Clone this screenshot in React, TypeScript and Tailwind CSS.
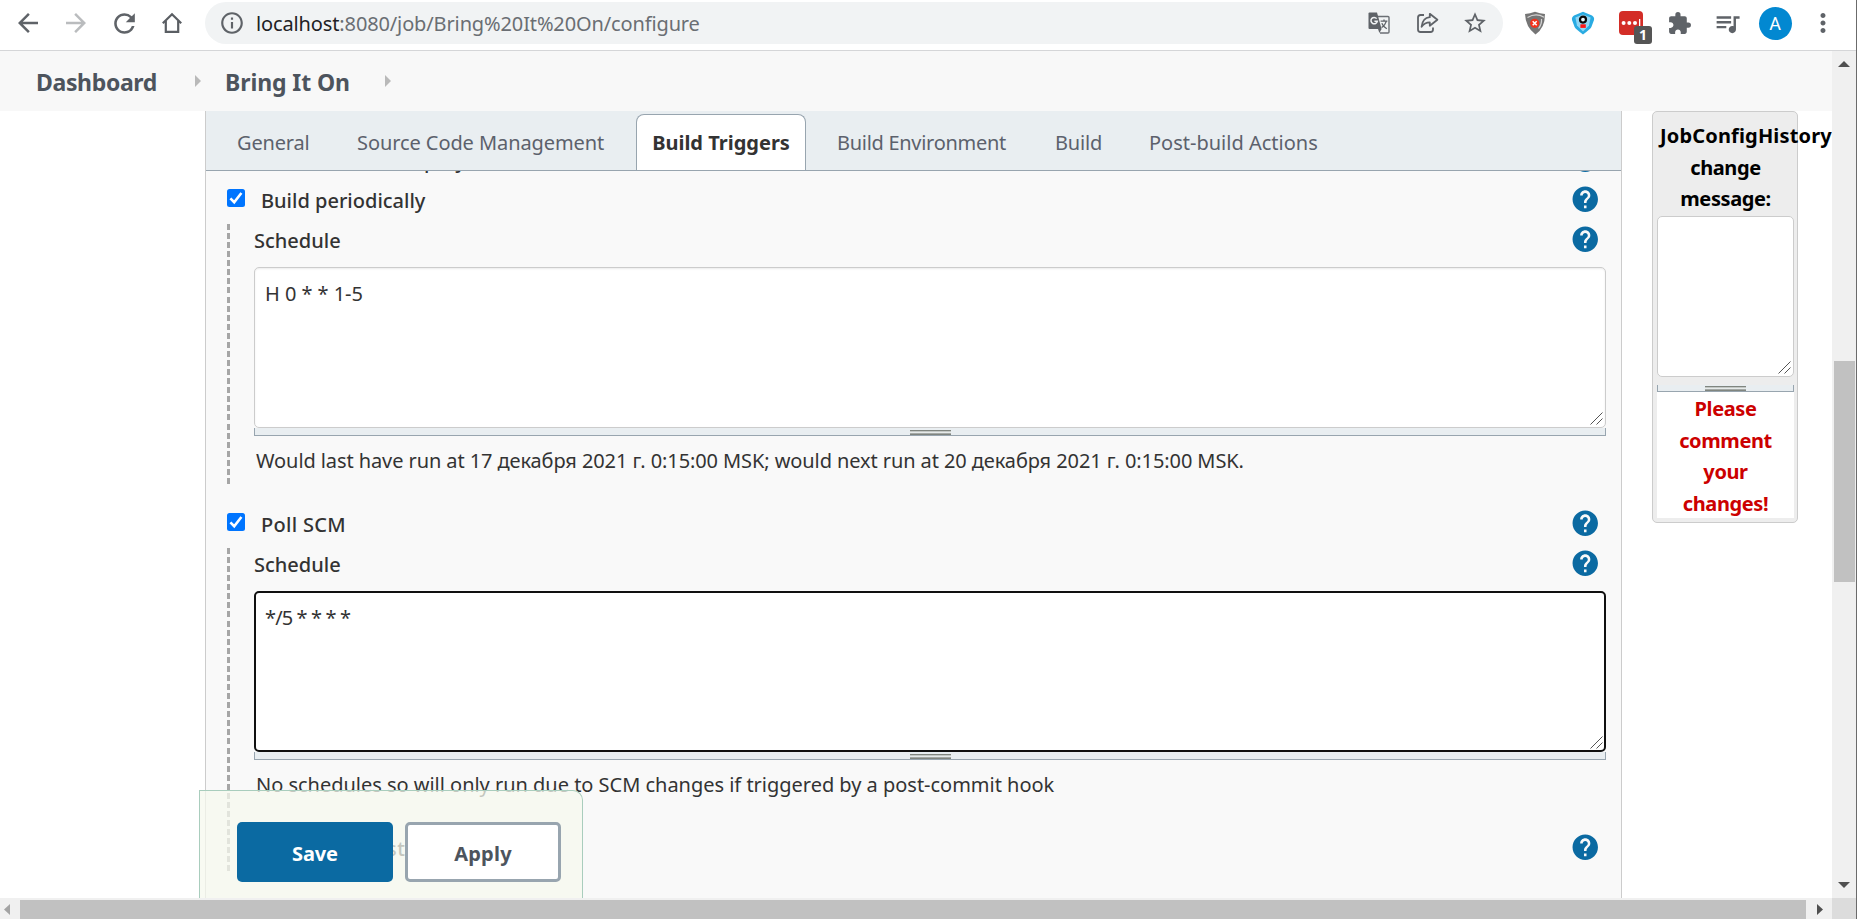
import type { ReactNode } from 'react';
import {
  MdArrowBack,
  MdArrowForward,
  MdExtension,
  MdHelp,
  MdInfoOutline,
  MdMoreVert,
  MdQueueMusic,
  MdRefresh,
  MdStarBorder,
} from 'react-icons/md';

function Cell({ children }: { children: ReactNode }) {
  return <div className="flex h-full w-12 shrink-0 items-center justify-center">{children}</div>;
}

function HomeIcon() {
  return (
    <svg width="22" height="22" viewBox="0 0 22 22" fill="none" stroke="#5a5e63" strokeWidth="2.2">
      <path d="M1.8 11.3 L11 2.2 L20.2 11.3" />
      <path d="M4.8 9 V19.8 H17.2 V9" />
    </svg>
  );
}

function TranslateIcon() {
  return (
    <svg width="22" height="22" viewBox="0 0 22 22" fill="none">
      <path d="M9 4.5 H20 Q21 4.5 21 5.5 V20 Q21 21 20 21 H12" stroke="#6b6f74" strokeWidth="1.4" />
      <path d="M1.5 .5 H9 L13.6 17 H1.5 Q.5 17 .5 16 V1.5 Q.5 .5 1.5 .5 Z" fill="#5f6368" />
      <path d="M10 17 H13.6 L11.4 21 Z" fill="#5f6368" />
      <path d="M8.7 6.6 A3.2 3.2 0 1 0 9.3 9.3 H6.4" stroke="#f1f3f4" strokeWidth="1.5" />
      <path d="M12.6 9.2 H19.4 M16 7.4 V9.2 M18.3 9.4 Q17 13.5 13.6 15.6 M13.8 11.2 Q15.2 14.4 18.8 16.8" stroke="#5f6368" strokeWidth="1.3" />
    </svg>
  );
}

function ShareIcon() {
  return (
    <svg width="23" height="22" viewBox="0 0 23 22" fill="none" stroke="#5f6368" strokeWidth="1.8" strokeLinejoin="round">
      <path d="M8 3 H4.5 Q2 3 2 5.5 V17.5 Q2 20 4.5 20 H14.5 Q17 20 17 17.5 V15.5" />
      <path d="M13.8 1.8 L21.4 7.8 L13.8 13.8 V10.4 Q8.6 10.4 5.6 14.8 Q6.4 6 13.8 5.2 Z" />
    </svg>
  );
}

function ShieldIcon() {
  return (
    <svg width="22" height="24" viewBox="0 0 22 24" fill="none">
      <path d="M1 3 Q6 2.8 11 .8 Q16 2.8 21 3 Q21 17 11.5 23.5 Q1.5 16 1 3 Z" fill="#757575" />
      <path d="M3.5 6.5 Q12 1.5 20 6.2 M14.5 17.5 Q18 13 17.5 8" stroke="#d4d4d4" strokeWidth="1.2" />
      <circle cx="10.7" cy="12.3" r="4.6" fill="#f3321c" />
      <path d="M8.7 10.3 L12.7 14.3 M12.7 10.3 L8.7 14.3" stroke="#fff" strokeWidth="1.5" />
    </svg>
  );
}

function PentagonIcon() {
  return (
    <svg width="24" height="24" viewBox="0 0 24 24" fill="none">
      <path d="M12 .8 L21 4.4 Q23.6 6 23 9 L20.4 16 Q19.6 18 12 23.4 Q4.4 18 3.6 16 L1 9 Q.4 6 3 4.4 Z" fill="#29abe2" />
      <path d="M12 3.4 L19.6 6.6 L18 14.6 L12 20.4 L6 14.6 L4.4 6.6 Z" fill="#8fd6f5" />
      <circle cx="12" cy="8.6" r="3" fill="#e8f7fd" stroke="#0a0a0a" strokeWidth="2.2" />
      <rect x="9.4" y="13.3" width="5.4" height="3.6" fill="#ff1616" />
    </svg>
  );
}

function PasswordIcon() {
  return (
    <div className="relative size-6 rounded-sm bg-[#d32d27]">
      <svg width="24" height="24" viewBox="0 0 24 24" fill="#fff">
        <circle cx="4.6" cy="12" r="2" />
        <circle cx="10.3" cy="12" r="2" />
        <circle cx="16" cy="12" r="2" />
        <rect x="20" y="8" width="1.3" height="8" />
      </svg>
      <div className="absolute top-[15px] left-[15px] flex h-[18px] w-[18px] items-center justify-center rounded-[3px] bg-[#555] text-[14px] leading-none font-bold text-white">
        1
      </div>
    </div>
  );
}

function BrowserBar() {
  return (
    <header className="flex h-[51px] shrink-0 items-start border-b border-[#d5d6d8] bg-white pt-0.5 pl-1 text-[#5f6368]">
      <div className="flex h-[42px] pr-[9px]">
        <Cell><MdArrowBack size={30} /></Cell>
        <Cell><MdArrowForward size={30} className="text-[#babcbe]" /></Cell>
        <Cell><MdRefresh size={31} /></Cell>
        <Cell><HomeIcon /></Cell>
      </div>
      <div className="flex h-[42px] w-[1298px] items-center rounded-full bg-[#f1f3f4] pr-1 pl-3.5">
        <MdInfoOutline size={26} />
        <div className="flex-1 pt-0.5 pl-[11px] text-[20px] leading-[40px] tracking-[-0.13px] text-[#6a6e73]">
          <span className="text-[#202124]">localhost</span>:8080/job/Bring%20It%20On/configure
        </div>
        <Cell><TranslateIcon /></Cell>
        <Cell><ShareIcon /></Cell>
        <Cell><MdStarBorder size={26} /></Cell>
      </div>
      <div className="flex h-[42px] pl-2">
        <Cell><ShieldIcon /></Cell>
        <Cell><PentagonIcon /></Cell>
        <Cell><PasswordIcon /></Cell>
        <Cell><MdExtension size={25} /></Cell>
        <Cell><MdQueueMusic size={29} /></Cell>
        <Cell>
          <div className="flex size-[33px] items-center justify-center rounded-full bg-[#0288d1] font-[Roboto,sans-serif] text-[18px] text-white">A</div>
        </Cell>
        <Cell><MdMoreVert size={30} /></Cell>
      </div>
    </header>
  );
}

function Crumb() {
  return (
    <svg width="6" height="12" viewBox="0 0 6 12" fill="#b9b9b9">
      <path d="M0 0 L6 6 L0 12 Z" />
    </svg>
  );
}

function Breadcrumbs() {
  return (
    <nav className="flex h-[60px] shrink-0 items-center bg-[#f8f8f8] pl-9 text-[23px] font-bold text-[#4d545d]">
      <span className="w-[159px] pt-[3px] tracking-[-0.35px]">Dashboard</span>
      <Crumb />
      <span className="ml-[24px] w-[160px] pt-[3px] tracking-[-0.1px]">Bring It On</span>
      <Crumb />
    </nav>
  );
}

function Tabs() {
  return (
    <div className="flex h-[60px] shrink-0 border-b border-[#98a5af] bg-[#e9eef1] pt-3 pl-[31px] leading-[40px] text-[#5c616c]">
      <div className="w-[120px] tracking-[-0.18px]">General</div>
      <div className="w-[279px] tracking-[-0.08px]">Source Code Management</div>
      <div className="-mt-[9px] mr-[31px] h-[56px] w-[170px] rounded-t-lg border border-b-0 border-[#98a5af] bg-white pt-2 text-center font-bold text-[#333]">
        Build Triggers
      </div>
      <div className="w-[218px] tracking-[-0.29px]">Build Environment</div>
      <div className="w-[94px] tracking-[-0.17px]">Build</div>
      <div className="tracking-[0px]">Post-build Actions</div>
    </div>
  );
}

function Help() {
  return <MdHelp size={30.5} className="mt-[2.5px] mr-[20.5px] ml-auto shrink-0 text-[#0b6aa2]" />;
}

function Checkbox({ checked }: { checked: boolean }) {
  return (
    <svg width="18" height="18" viewBox="0 0 18 18" fill="none" className="mt-2 shrink-0">
      {checked ? (
        <>
          <rect width="18" height="18" rx="2.5" fill="#0075ff" />
          <path d="M3.4 9.4 L7.2 13.2 L14.4 4" stroke="#fff" strokeWidth="2.6" />
        </>
      ) : (
        <rect x=".5" y=".5" width="17" height="17" rx="2.5" fill="#fff" stroke="#767676" />
      )}
    </svg>
  );
}

function OptionRow({ label, checked }: { label: string; checked: boolean }) {
  return (
    <div className="flex h-10 leading-[40px] font-medium">
      <Checkbox checked={checked} />
      <span className="ml-4 whitespace-nowrap">{label}</span>
      <Help />
    </div>
  );
}

function Corner() {
  return (
    <svg width="13" height="13" viewBox="0 0 13 13" fill="none" stroke="#555" className="mt-auto ml-auto">
      <path d="M.5 12.5 L12.5 .5 M6.5 12.5 L12.5 6.5" />
    </svg>
  );
}

function Grip() {
  return (
    <div className="flex h-[5px] w-[41px] flex-col">
      <div className="h-px bg-[#80857f]" />
      <div className="h-px bg-[#c4c8c5]" />
      <div className="h-px bg-[#e6eae9]" />
      <div className="h-px bg-[#a5a9a6]" />
      <div className="h-px bg-[#80857f]" />
    </div>
  );
}

function Schedule({ value, hint, focused, children }: { value: string; hint: string; focused?: boolean; children?: ReactNode }) {
  return (
    <div className="flex">
      <div className="mt-[3px] w-[3px] shrink-0 bg-[repeating-linear-gradient(to_bottom,#a6a6a6_0_6px,transparent_6px_9.07px)]" />
      <div className="ml-6 flex-1 pb-2">
        <div className="flex h-10 leading-[40px] font-medium">
          Schedule
          <Help />
        </div>
        <div
          className={
            focused
              ? 'mt-1.5 mr-[15px] flex h-[161px] rounded-[5px] border-2 border-[#101010] bg-white pt-2.5 pr-px pb-px pl-[9px] leading-[30px]'
              : 'mt-1.5 mr-[15px] flex h-[161px] rounded-[5px] border border-[#ccc] bg-white pt-[11px] pr-0.5 pb-0.5 pl-2.5 leading-[30px] shadow-[inset_0_1px_2px_rgba(0,0,0,0.08)]'
          }
        >
          <span className={focused ? 'tracking-[-0.88px]' : 'tracking-[-0.05px]'}>{value}</span>
          <Corner />
        </div>
        <div className="mr-[15px] flex h-2 items-end justify-center border border-t-0 border-[#98a5af] bg-[#e9eef1]">
          <Grip />
        </div>
        <div
          className={
            focused
              ? 'mt-2.5 pl-0.5 leading-[30px] tracking-[-0.02px] whitespace-nowrap'
              : 'mt-2.5 pl-0.5 leading-[30px] tracking-[-0.09px] whitespace-nowrap'
          }
        >
          {hint}
        </div>
        {children}
      </div>
    </div>
  );
}

function SidePanel() {
  return (
    <aside className="ml-[30px] h-[412px] w-[146px] shrink-0 rounded-[5px] border border-[#ccc] bg-[#ededed] pt-2 pr-[3px] pl-1 text-center leading-[31.6px] font-bold text-black">
      <div className="h-[96px] tracking-[-0.4px]">
        <div className="-mr-10 pl-[3px] text-left tracking-[0.16px]">JobConfigHistory</div>
        <div>change</div>
        <div>message:</div>
      </div>
      <div className="flex h-[161px] rounded-[5px] border border-[#ccc] bg-white pr-0.5 pb-0.5">
        <Corner />
      </div>
      <div className="mt-2 flex h-[7px] items-end justify-center border border-t-0 border-[#98a5af] bg-[#e9eef1]">
        <Grip />
      </div>
      <div className="h-[126px] bg-white pt-px leading-[31.5px] tracking-[-0.4px] text-[#c00]">
        <div>Please</div>
        <div>comment</div>
        <div>your</div>
        <div>changes!</div>
      </div>
    </aside>
  );
}

function VerticalScrollbar() {
  return (
    <div className="flex w-[24px] shrink-0 flex-col items-center bg-[#f0f0f0] pt-[10px] pb-[10px]">
      <svg width="12" height="6" viewBox="0 0 12 6" fill="#505050"><path d="M6 0 L12 6 H0 Z" /></svg>
      <div className="mt-[294px] ml-[1px] h-[221px] w-[21px] bg-[#c1c1c1]" />
      <svg width="12" height="6" viewBox="0 0 12 6" fill="#505050" className="mt-auto"><path d="M0 0 H12 L6 6 Z" /></svg>
    </div>
  );
}

function HorizontalScrollbar() {
  return (
    <div className="flex h-[21px] shrink-0 items-center bg-[#f0f0f0] pt-0.5">
      <svg width="6" height="11" viewBox="0 0 6 11" fill="#a3a3a3" className="mr-[10px] ml-1"><path d="M6 0 V11 L0 5.5 Z" /></svg>
      <div className="h-full w-[1786px] bg-[#c1c1c1]" />
      <svg width="6" height="11" viewBox="0 0 6 11" fill="#505050" className="ml-[11px]"><path d="M0 0 V11 L6 5.5 Z" /></svg>
      <div className="-mt-0.5 ml-auto h-[21px] w-6 bg-[#dcdcdc]" />
    </div>
  );
}

function SaveBar() {
  return (
    <div className="absolute bottom-0 left-[199px] flex h-[108px] w-[384px] gap-3 rounded-tr-[10px] border border-b-0 border-[#a9cdbd] bg-[#f6f8ed]/75 pt-[31px] pl-[37px] text-center font-bold">
      <div className="h-[60px] w-[156px] rounded-[5px] bg-[#0b6aa2] pt-3 leading-[40px] tracking-[-0.14px] text-white">Save</div>
      <div className="h-[60px] w-[156px] rounded-[5px] border-[3px] border-[#98a5af] bg-white pt-[9px] leading-[40px] tracking-[0.23px] text-[#4d545d]">Apply</div>
    </div>
  );
}

export default function App() {
  return (
    <div className="flex h-[919px] w-[1857px] overflow-hidden bg-white font-['Noto_Sans','Open_Sans',sans-serif] text-[20px] text-[#333]">
      <div className="flex w-[1856px] shrink-0 flex-col">
        <BrowserBar />
        <div className="flex h-[847px] shrink-0">
          <div className="relative flex w-[1832px] shrink-0 flex-col overflow-hidden">
            <Breadcrumbs />
            <div className="flex h-[787px] pl-[205px]">
              <main className="flex w-[1417px] shrink-0 flex-col border-x border-[#ccc] bg-[#f9f9f9]">
                <Tabs />
                <div className="h-[727px] overflow-hidden pl-[21px]">
                  <div className="-mt-[30px]">
                    <OptionRow label="Build after other projects are built" checked={false} />
                  </div>
                  <OptionRow label="Build periodically" checked />
                  <Schedule
                    value="H 0 * * 1-5"
                    hint="Would last have run at 17 декабря 2021 г. 0:15:00 MSK; would next run at 20 декабря 2021 г. 0:15:00 MSK."
                  />
                  <div className="mt-[21px] tracking-[0.3px]">
                    <OptionRow label="Poll SCM" checked />
                  </div>
                  <Schedule
                    value="*/5 * * * *"
                    hint="No schedules so will only run due to SCM changes if triggered by a post-commit hook"
                    focused
                  >
                    <div className="mt-[29px] h-[35px] tracking-[0.6px]">
                      <OptionRow label="Ignore post-commit hooks" checked={false} />
                    </div>
                  </Schedule>
                </div>
              </main>
              <SidePanel />
            </div>
            <SaveBar />
          </div>
          <VerticalScrollbar />
        </div>
        <HorizontalScrollbar />
      </div>
      <div className="w-px shrink-0 bg-[#6b6b6b]" />
    </div>
  );
}
